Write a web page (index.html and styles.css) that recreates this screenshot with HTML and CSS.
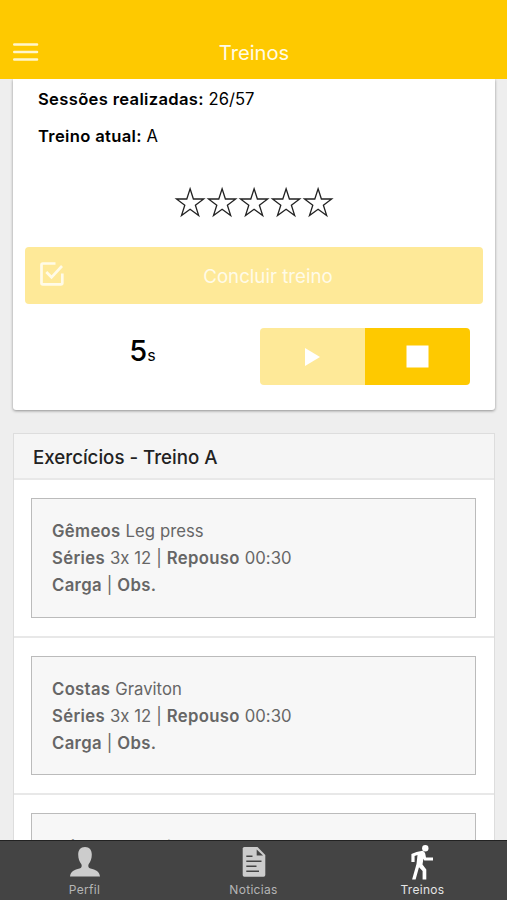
FILE: index.html
```html
<!DOCTYPE html>
<html lang="pt">
    <head>
        <meta charset="utf-8">
        <title>Treinos</title>
        <link rel="stylesheet" href="styles.css">
    </head>
    <body>
        <header class="bar">
            <svg class="menu" viewBox="0 0 26 20">
                <path d="M1.3 2.5H24M1.3 10H24M1.3 17.5H24"/>
            </svg>
            <h1>Treinos</h1>
        </header>

        <main class="content">
            <section class="card">
                <p><b>Sessões realizadas:</b> 26/57</p>
                <p><b>Treino atual:</b> A</p>
                <div class="stars">
                    <svg viewBox="0 0 32 32"><path d="M16 2.8L19.3 13H29.6L21.3 19.2L24.6 29.6L16 23.3L7.4 29.6L10.7 19.2L2.4 13H12.7Z"/></svg>
                    <svg viewBox="0 0 32 32"><path d="M16 2.8L19.3 13H29.6L21.3 19.2L24.6 29.6L16 23.3L7.4 29.6L10.7 19.2L2.4 13H12.7Z"/></svg>
                    <svg viewBox="0 0 32 32"><path d="M16 2.8L19.3 13H29.6L21.3 19.2L24.6 29.6L16 23.3L7.4 29.6L10.7 19.2L2.4 13H12.7Z"/></svg>
                    <svg viewBox="0 0 32 32"><path d="M16 2.8L19.3 13H29.6L21.3 19.2L24.6 29.6L16 23.3L7.4 29.6L10.7 19.2L2.4 13H12.7Z"/></svg>
                    <svg viewBox="0 0 32 32"><path d="M16 2.8L19.3 13H29.6L21.3 19.2L24.6 29.6L16 23.3L7.4 29.6L10.7 19.2L2.4 13H12.7Z"/></svg>
                </div>
                <button class="finish" disabled>
                    <svg viewBox="0 0 24 24">
                        <path d="M15.5 1.5H2.8Q1.5 1.5 1.5 2.8V21Q1.5 22.3 2.8 22.3H21Q22.3 22.3 22.3 21V11.5"/>
                        <path d="M6.3 10L11.5 15.3L22 4"/>
                    </svg>
                    <span>Concluir treino</span>
                </button>
                <div class="timer">
                    <div class="time">5<small>s</small></div>
                    <div class="controls">
                        <button class="play" disabled>
                            <svg viewBox="0 0 24 24"><path d="M4 3L19 12L4 21Z"/></svg>
                        </button>
                        <button class="stop">
                            <svg viewBox="0 0 24 24"><path d="M.5 .5H22.5V22.5H.5Z"/></svg>
                        </button>
                    </div>
                </div>
            </section>

            <section class="list">
                <h2>Exercícios - Treino A</h2>
                <div class="item">
                    <div class="exercise">
                        <b>Gêmeos</b> Leg press<br>
                        <b>Séries</b> 3x 12 | <b>Repouso</b> 00:30<br>
                        <b>Carga</b> | <b>Obs.</b>
                    </div>
                </div>
                <div class="item">
                    <div class="exercise">
                        <b>Costas</b> Graviton<br>
                        <b>Séries</b> 3x 12 | <b>Repouso</b> 00:30<br>
                        <b>Carga</b> | <b>Obs.</b>
                    </div>
                </div>
                <div class="item">
                    <div class="exercise">
                        <b>Tríceps</b> Francês
                    </div>
                </div>
            </section>
        </main>

        <nav class="tabs">
            <a class="tab">
                <svg viewBox="0 0 36 36">
                    <path d="M18 3C22.5 3 24.8 6 24.8 10.5C24.8 14.5 23.5 18 21.6 20.2C20.8 22.3 21.5 23.8 23.5 24.5C28.5 26 32.5 27 33 32.6H3C3.5 27 7.5 26 12.5 24.5C14.5 23.8 15.2 22.3 14.4 20.2C12.5 18 11.2 14.5 11.2 10.5C11.2 6 13.5 3 18 3Z"/>
                </svg>
                <span>Perfil</span>
            </a>
            <a class="tab">
                <svg viewBox="0 0 36 36">
                    <path d="M8.3 3H21.5L29.3 11V31Q29.3 32.7 27.6 32.7H8.3Q6.7 32.7 6.7 31V4.6Q6.7 3 8.3 3Z"/>
                    <path class="fold" d="M20.7 5.5V11.5H27Z"/>
                    <path class="lines" d="M10.3 12.3H16.5M10.3 17.3H25.5M10.3 22.3H20.5M10.3 27.3H23"/>
                </svg>
                <span>Noticias</span>
            </a>
            <a class="tab active">
                <svg viewBox="0 0 36 36">
                    <circle cx="20.3" cy="4.2" r="3.2"/>
                    <path d="M11.5 8L17.5 6.8Q19.6 7.2 20.2 9.5L21 13.5H28V16.5H19.3L18.4 14.7L17.5 20.5L21.3 25.5V35.5H17.6V27L14 23.3L10.6 35.5H7.1L11.5 20L12.5 11L9.6 12V18H6.4V10.1Z"/>
                </svg>
                <span>Treinos</span>
            </a>
        </nav>
    </body>
</html>
```

FILE: styles.css
```css
*{
    margin: 0;
    padding: 0;
    box-sizing: border-box;
}
body{
    height: 100vh;
    display: flex;
    flex-direction: column;
    overflow: hidden;
    background: #eee;
    color: #000;
    font-family: 'Inter', 'Liberation Sans', sans-serif;
    font-size: 16.6px;
    font-feature-settings: 'calt' 0;
}
b{
    font-weight: 600;
    letter-spacing: .33px;
}
svg{
    display: block;
    fill: none;
}
button{
    border: 0;
    background: #fec900;
    color: #fff;
    font-family: inherit;
}
button:disabled{
    background: #fee998;
}
.bar{
    flex: none;
    height: 79px;
    padding: 25px 12px 0 13px;
    display: grid;
    grid-template-columns: 26px 1fr 26px;
    align-items: center;
    background: #fec900;
    color: #fffbe6;
}
.bar h1{
    font-size: 20.2px;
    font-weight: 400;
    text-align: center;
}
.menu{
    width: 26px;
    height: 20px;
    stroke: #fff6cc;
    stroke-width: 2.6;
    stroke-linecap: round;
}
.content{
    flex: 1;
    min-height: 0;
    overflow: hidden;
    padding: 0 12px 0 13px;
}
.card{
    height: 331px;
    padding: 2px 12px 0;
    background: #fff;
    border-radius: 0 0 3px 3px;
    box-shadow: 0 1px 3px rgba(0,0,0,.4);
}
.card p{
    padding-left: 13px;
    line-height: 36.5px;
}
.stars{
    display: flex;
    justify-content: center;
    margin-top: 32px;
}
.stars svg{
    width: 32.2px;
    height: 32px;
    stroke: #222;
    stroke-width: 1.3;
}
.finish{
    width: 100%;
    height: 57px;
    margin-top: 29px;
    padding: 1px 11px 0 15px;
    display: grid;
    grid-template-columns: 24px 1fr;
    align-items: center;
    border-radius: 4px;
    font-size: 18.7px;
}
.finish svg{
    width: 24px;
    height: 24px;
    margin-bottom: 4px;
    stroke: #fffbe8;
    stroke-width: 2.7;
}
.finish span{
    color: #fffbe8;
}
.timer{
    margin-top: 24px;
    padding-right: 13px;
    display: grid;
    grid-template-columns: 1fr 210px;
    align-items: center;
}
.time{
    padding-bottom: 12px;
    text-align: center;
    font-size: 29px;
    font-weight: 500;
}
.time small{
    font-size: 16px;
    font-weight: 400;
}
.controls{
    display: flex;
    height: 57px;
    border-radius: 4px;
    overflow: hidden;
}
.controls button{
    flex: 1;
    display: flex;
    align-items: center;
    justify-content: center;
}
.controls svg{
    width: 24px;
    height: 24px;
    fill: #fff;
}
.list{
    margin-top: 23px;
    background: #fff;
    border: 1px solid #ddd;
}
.list h2{
    height: 44px;
    padding-left: 19px;
    line-height: 47px;
    background: #f5f5f5;
    color: #222;
    font-size: 18.7px;
    font-weight: 450;
}
.item{
    padding: 18px 18px 18px 17px;
    border-top: 2px solid #e8e8e8;
}
.exercise{
    height: 119.5px;
    padding: 19px 20px;
    border: 1px solid #bbb;
    background: #f7f7f7;
    color: #666;
    font-size: 16.7px;
    line-height: 27px;
    word-spacing: .3px;
}
.item:last-child .exercise{
    padding-top: 20px;
    color: #333;
}
.tabs{
    flex: none;
    height: 60px;
    display: flex;
    background: #444;
    border-top: 1px solid #222;
}
.tab{
    flex: 1;
    display: flex;
    flex-direction: column;
    align-items: center;
    padding-top: 3px;
    color: #b5b5b5;
    font-size: 12px;
}
.tab svg{
    width: 36px;
    height: 36px;
    fill: #ccc;
}
.tab span{
    margin-top: 2px;
    letter-spacing: .3px;
}
.tab .fold{
    fill: #444;
}
.tab .lines{
    stroke: #444;
    stroke-width: 1.5;
}
.tab.active{
    color: #e5e5e5;
}
.tab.active svg{
    fill: #fff;
}
```
